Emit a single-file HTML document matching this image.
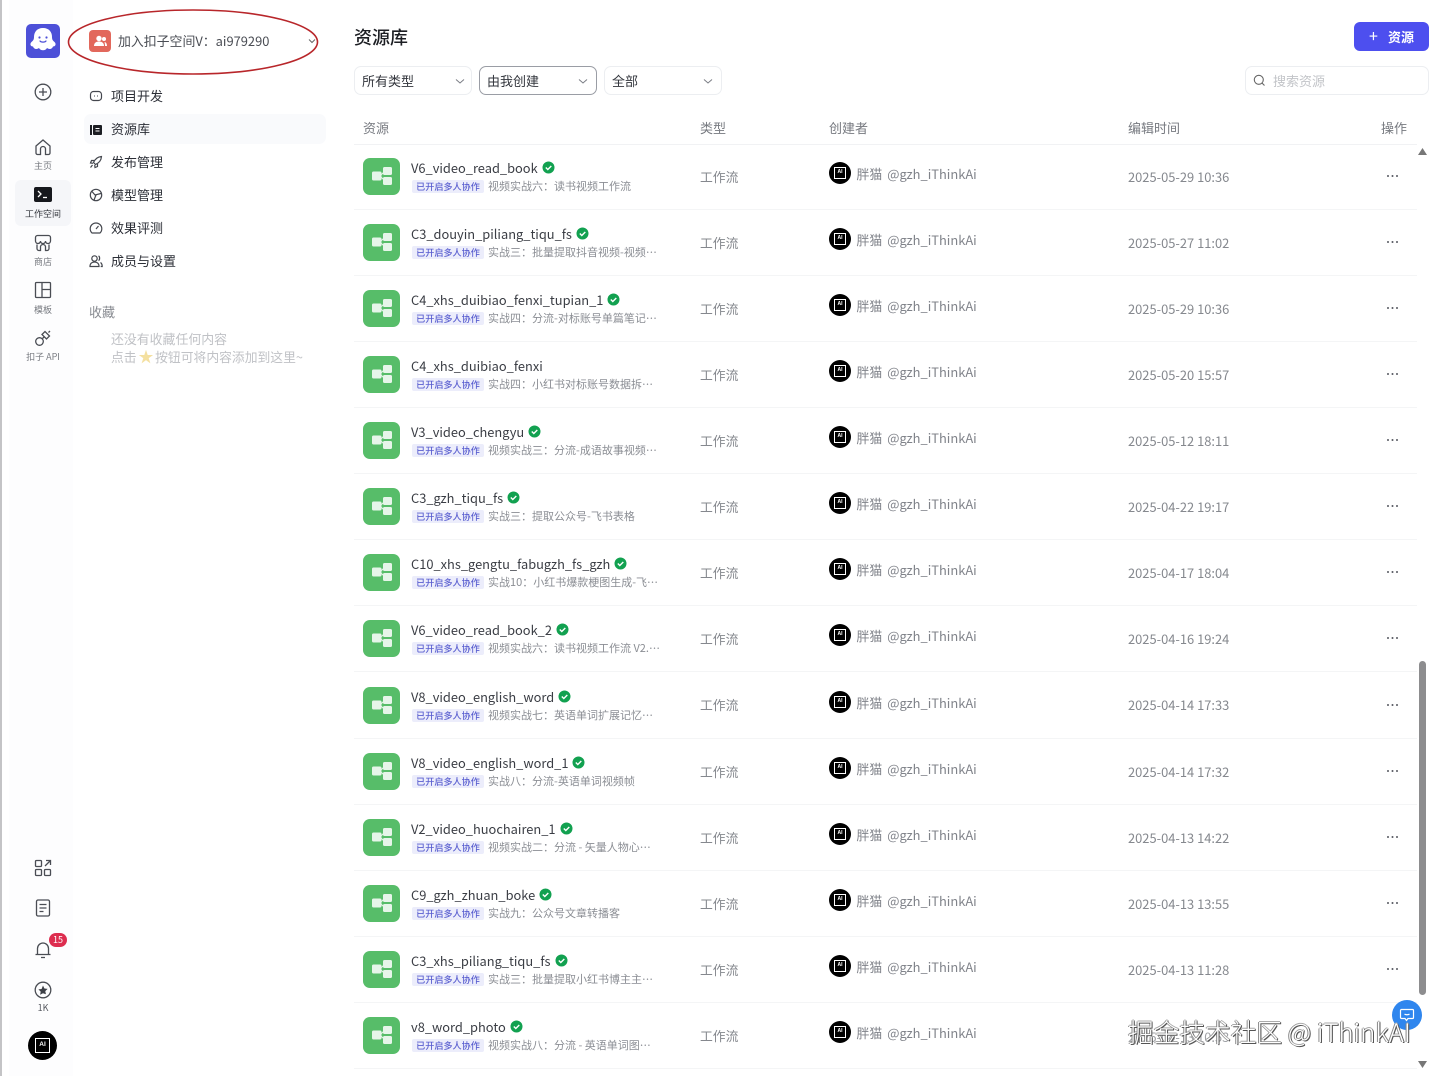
<!DOCTYPE html>
<html lang="zh"><head><meta charset="utf-8"><title>资源库</title>
<style>
*{box-sizing:border-box}
html,body{margin:0;padding:0;width:1440px;height:1076px;overflow:hidden;background:#fff}
body{position:relative;font-family:"Noto Sans CJK SC","Liberation Sans",sans-serif;color:#1f2329}
.a{position:absolute;white-space:nowrap}
.nav{position:absolute;left:111px;font-size:13px;line-height:20px;color:#2b2e36}
.ni{position:absolute;left:88px;width:16px;height:16px;fill:none;stroke:#44474e;stroke-width:1.2}
.side{position:absolute;left:14px;width:58px;text-align:center;font-size:9px;line-height:12px;color:#777a80}
.si{position:absolute;fill:none;stroke:#4a4d54;stroke-width:1.3}
.sel{position:absolute;top:66px;height:29px;border:1px solid #eceef1;border-radius:7px;background:#fff;font-size:13px;line-height:28px;padding-left:7px;color:#33363d}
.sel svg{position:absolute;right:6px;top:9px;width:10px;height:10px;fill:none;stroke:#7a7d84;stroke-width:1}
.th{position:absolute;top:118.500px;font-size:13px;line-height:18px;color:#777a80}
.row{position:absolute;left:354px;width:1063px;height:66px;border-bottom:1px solid #f4f5f6}
.ic{position:absolute;left:9px;top:14px;width:37px;height:37px;border-radius:7px;background:#57bd69}
.ic svg{position:absolute;left:8px;top:8px;width:21px;height:21px}
.nm{position:absolute;left:57px;top:14px;font-size:12.850px;line-height:20px;color:#3a3d44;white-space:nowrap}
.nm svg{display:inline-block;width:13px;height:13px;vertical-align:-1px;margin-left:4px}
.tag{position:absolute;left:58px;top:36px;width:72px;height:13px;background:#ecedfb;border-radius:2px;color:#5a5fd0;font-size:9.100px;font-weight:500;line-height:13px;text-align:center;white-space:nowrap}
.de{position:absolute;left:134px;top:34px;font-size:11px;line-height:17px;color:#8b8e94;white-space:nowrap}
.ty{position:absolute;left:346px;top:23px;font-size:12.800px;line-height:19px;color:#85888e}
.av{position:absolute;left:475px;top:18px;width:22px;height:22px;border-radius:50%;background:#000}
.av i{position:absolute;left:5px;top:5px;width:12px;height:12px;border:1.500px solid #fff;color:#fff;font:normal bold 5px/9px "Liberation Sans",sans-serif;text-align:center}
.cr{position:absolute;left:502.500px;top:20px;font-size:12.900px;line-height:19px;color:#80838a;white-space:nowrap}
.cr span{margin-left:5px}
.ti{position:absolute;left:774px;top:23px;font-size:12.900px;line-height:19px;color:#85888e;white-space:nowrap}
.dt{position:absolute;left:1033px;top:31px;width:2px;height:2px;border-radius:50%;background:#55585f;box-shadow:4.500px 0 #55585f,9px 0 #55585f}
</style></head><body>
<svg width="0" height="0" style="position:absolute"><defs>
<symbol id="flow" viewBox="0 0 21 21"><g fill="#e6f5e9"><rect x="1" y="5.500" width="9.500" height="9" rx="1.500"/><rect x="12" y="1" width="9" height="8" rx="1.500"/><rect x="12" y="11" width="9" height="8" rx="1.500"/></g><path d="M10 9l3-3M10 11l3 3" stroke="#e6f5e9" stroke-width="1"/></symbol>
<symbol id="ok" viewBox="0 0 13 13"><circle cx="6.500" cy="6.500" r="6" fill="#12a150"/><path d="M3.800 6.500l2 2 3.500-3.500" fill="none" stroke="#fff" stroke-width="1.400"/></symbol>
</defs></svg>
<div class="a" style="left:0;top:0;width:2px;height:1076px;background:#c4c4c6"></div>
<div class="a" style="left:9px;top:0;width:64px;height:1076px;background:#fdfdfe"></div>

<!-- logo -->
<svg class="a" style="left:26px;top:24px" width="34" height="34" viewBox="0 0 34 34"><rect width="34" height="34" rx="5" fill="#4d50d8"/><path d="M17 4c-6 0-9 4-9 9 0 2-.5 3.500-2.500 5-2 2-1 4.500 1.500 4.500 1 3 4 3 6 1.500 1.500 3 6.500 3 8 0 2 1.500 5 1.500 6-1.500 2.500 0 3.500-2.500 1.500-4.500-2-1.500-2.500-3-2.500-5 0-5-3-9-9-9z" fill="#fff"/><circle cx="13.500" cy="13.500" r="1.100" fill="#4d50d8"/><circle cx="20.500" cy="13.500" r="1.100" fill="#4d50d8"/><path d="M14 17c1 1.500 5 1.500 6 0" fill="none" stroke="#4d50d8" stroke-width="1.200" stroke-linecap="round"/></svg>

<!-- red ellipse -->
<svg class="a" style="left:66px;top:8px" width="254" height="68" viewBox="0 0 254 68"><ellipse cx="127" cy="34" rx="124.500" ry="32" fill="none" stroke="#b8262a" stroke-width="1.600"/></svg>
<svg class="a" style="left:89px;top:30px" width="22" height="22" viewBox="0 0 22 22"><rect width="22" height="22" rx="4" fill="#e2685c"/><circle cx="10" cy="8.500" r="2.700" fill="#fff"/><path d="M5 16c0-3 2-4.500 5-4.500s5 1.500 5 4.500z" fill="#fff"/><circle cx="15" cy="9" r="2" fill="#fff"/><path d="M15.500 12c1.500.3 2.500 1.700 2.500 4h-2c0-1.500-.2-3-.5-4z" fill="#fff"/></svg>
<div class="a" style="left:118px;top:31px;font-size:12.900px;line-height:20px;color:#4a4d54">加入扣子空间V：ai979290</div>
<svg class="a" style="left:308px;top:37px" width="8" height="8" viewBox="0 0 8 8"><path d="M1 2.500l3 3 3-3" fill="none" stroke="#666" stroke-width="1"/></svg>

<!-- left rail -->
<svg class="si" style="left:34px;top:83px" width="18" height="18" viewBox="0 0 18 18"><circle cx="9" cy="9" r="7.800"/><path d="M9 5v8M5 9h8"/></svg>
<svg class="si" style="left:34px;top:138px" width="18" height="18" viewBox="0 0 18 18"><path d="M2 8l7-6 7 6v7a1.500 1.500 0 0 1-1.500 1.500h-3V11a2.500 2.500 0 0 0-5 0v5.500h-3A1.500 1.500 0 0 1 2 15z"/></svg>
<div class="side" style="top:160px">主页</div>
<div class="a" style="left:15px;top:180px;width:56px;height:46px;border-radius:6px;background:#f5f6f9"></div>
<svg class="a" style="left:34px;top:187px" width="18" height="15" viewBox="0 0 18 15"><rect width="18" height="15" rx="2" fill="#16181d"/><path d="M4 4l3 3-3 3" fill="none" stroke="#fff" stroke-width="1.300"/><path d="M9 10.500h4" stroke="#fff" stroke-width="1.300"/></svg>
<div class="side" style="top:208px;color:#33363d">工作空间</div>
<svg class="si" style="left:34px;top:234px" width="18" height="18" viewBox="0 0 18 18"><path d="M3.500 1.500h11a2 2 0 0 1 2 2v3.500a2.500 2.500 0 0 1-5 0 2.500 2.500 0 0 1-5 0 2.500 2.500 0 0 1-5 0V3.500a2 2 0 0 1 2-2zM3 10.500v4a2 2 0 0 0 2 2h1.500V13a2.500 2.500 0 0 1 5 0v3.500H13a2 2 0 0 0 2-2v-4"/></svg>
<div class="side" style="top:256px">商店</div>
<svg class="si" style="left:34px;top:281px" width="18" height="18" viewBox="0 0 18 18"><rect x="1.500" y="1.500" width="15" height="15" rx="1"/><path d="M8 1.500v15M8 8.500h8.500"/></svg>
<div class="side" style="top:304px">模板</div>
<svg class="si" style="left:34px;top:329px" width="18" height="18" viewBox="0 0 18 18"><circle cx="5.500" cy="12.500" r="3.800"/><path d="M8 5.500l3-3 4.500 4.500-3 3zM8.500 9.500l1.500-1.500M16 2l-1.500 1.500"/></svg>
<div class="side" style="top:351px">扣子 API</div>

<svg class="si" style="left:34px;top:859px" width="18" height="18" viewBox="0 0 18 18"><rect x="1.500" y="1.500" width="6" height="6" rx="1"/><rect x="1.500" y="10.500" width="6" height="6" rx="1"/><rect x="10.500" y="10.500" width="6" height="6" rx="1"/><path d="M11 7l5.500-5.500M12 1.500h4.500V6"/></svg>
<svg class="si" style="left:35px;top:899px" width="16" height="18" viewBox="0 0 16 18"><rect x="1.500" y="1" width="13" height="16" rx="1.500"/><path d="M4.500 5.500h7M4.500 9h7M4.500 12.500h4"/></svg>
<svg class="si" style="left:34px;top:940px" width="18" height="19" viewBox="0 0 18 19"><path d="M1.500 14.500h15M3.500 14.500V8.500a5.500 5.500 0 0 1 11 0v6M7 17.500h4"/></svg>
<div class="a" style="left:49px;top:933px;width:18px;height:14px;border-radius:7px;background:#dd2d4f;color:#fff;font-size:9px;line-height:14px;text-align:center">15</div>
<svg class="si" style="left:34px;top:981px" width="18" height="18" viewBox="0 0 18 18"><circle cx="9" cy="9" r="7.800"/><path d="M9 4.500l1.400 3 3.200.4-2.300 2.200.6 3.200L9 12.300l-2.900 1.500.6-3.200-2.300-2.200 3.200-.4z" fill="#3c3f46" stroke="none"/></svg>
<div class="side" style="top:1002px;color:#55585f">1K</div>
<div class="a" style="left:28px;top:1031px;width:29px;height:29px;border-radius:50%;background:#000"></div>
<div class="a" style="left:35px;top:1038px;width:15px;height:15px;border:1.500px solid #fff;color:#fff;font:bold 6.500px/12px 'Liberation Sans',sans-serif;text-align:center">AI</div>

<!-- second nav -->
<svg class="ni" style="top:88px" viewBox="0 0 16 16"><rect x="2.500" y="3.500" width="11" height="9" rx="3"/><path d="M6 8h.8M9.200 8h.8"/></svg>
<div class="nav" style="top:86px">项目开发</div>
<div class="a" style="left:84px;top:114px;width:242px;height:30px;border-radius:7px;background:#f9fafc"></div>
<svg class="a" style="left:90px;top:124px" width="12" height="12" viewBox="0 0 12 12"><rect x="0" y="1" width="2" height="10" fill="#1c1e23"/><rect x="3" y="1" width="9" height="10" rx="1" fill="#1c1e23"/><path d="M5.500 4.500h4M5.500 7h4" stroke="#fff"/></svg>
<div class="nav" style="top:119px">资源库</div>
<svg class="ni" style="top:154px" viewBox="0 0 16 16"><path d="M13.500 2.500c-4 .3-6.500 2.500-8 6l2 2c3.500-1.500 5.700-4 6-8zM6 6.500H3.500L2.500 9l2.500.3M9.500 10v2.500l-2.500 1-.3-2.500M4.500 11l-2 2.500"/></svg>
<div class="nav" style="top:152px">发布管理</div>
<svg class="ni" style="top:187px" viewBox="0 0 16 16"><circle cx="8" cy="8" r="5.700"/><path d="M4 4.500l3 3.500 6-1.500M8 8l-2 5"/></svg>
<div class="nav" style="top:185px">模型管理</div>
<svg class="ni" style="top:220px" viewBox="0 0 16 16"><path d="M4 13a5.800 5.800 0 1 1 8 0z"/><path d="M8 9l2.500-3"/></svg>
<div class="nav" style="top:218px">效果评测</div>
<svg class="ni" style="top:253px" viewBox="0 0 16 16"><circle cx="6.500" cy="5.500" r="2.700"/><path d="M2 13.500c0-3 2-4.500 4.500-4.500S11 10.500 11 13.500zM10.500 3c1.500.5 1.500 4 0 4.500M12.500 9.500c1 .7 1.700 2 1.700 4h-1.500"/></svg>
<div class="nav" style="top:251px">成员与设置</div>
<div class="a" style="left:89px;top:302px;font-size:13px;line-height:19px;color:#888b91">收藏</div>
<div class="a" style="left:111px;top:330px;font-size:12.900px;line-height:18px;color:#c0c2c6">还没有收藏任何内容</div>
<div class="a" style="left:111px;top:348px;font-size:12.800px;line-height:18px;color:#c0c2c6">点击 <span style="color:#f4e0a0;font-size:15px;line-height:0;display:inline-block;width:12.800px;text-indent:-1px">★</span> 按钮可将内容添加到这里~</div>

<!-- header -->
<div class="a" style="left:354px;top:24px;font-size:18px;line-height:26px;font-weight:500;color:#1c1e23">资源库</div>
<div class="a" style="left:1354px;top:22px;width:75px;height:29px;border-radius:6px;background:#4d4fef"></div>
<div class="a" style="left:1369px;top:22px;color:#fff;font-size:16px;line-height:27px;font-weight:400">+</div>
<div class="a" style="left:1388px;top:22px;color:#fff;font-size:13px;line-height:29px;font-weight:700">资源</div>

<div class="sel" style="left:354px;width:118px">所有类型<svg viewBox="0 0 10 10"><path d="M1 3.500L5 7l4-3.500"/></svg></div>
<div class="sel" style="left:479px;width:118px;border-color:#9a9da5">由我创建<svg viewBox="0 0 10 10" style="right:8px"><path d="M1 3.500L5 7l4-3.500"/></svg></div>
<div class="sel" style="left:604px;width:118px">全部<svg viewBox="0 0 10 10" style="right:8px"><path d="M1 3.500L5 7l4-3.500"/></svg></div>
<div class="a" style="left:1245px;top:66px;width:184px;height:29px;border:1px solid #eceef1;border-radius:7px;background:#fff"></div>
<svg class="a" style="left:1253px;top:74px" width="13" height="13" viewBox="0 0 13 13"><circle cx="5.800" cy="5.800" r="4.500" fill="none" stroke="#666" stroke-width="1.100"/><path d="M9 9l2.500 2.500" stroke="#666" stroke-width="1.100"/></svg>
<div class="a" style="left:1273px;top:71px;font-size:13px;line-height:19px;color:#c2c4c8">搜索资源</div>

<div class="th" style="left:363px">资源</div>
<div class="th" style="left:700px">类型</div>
<div class="th" style="left:829px">创建者</div>
<div class="th" style="left:1128px">编辑时间</div>
<div class="th" style="left:1381px">操作</div>
<div class="a" style="left:354px;top:144px;width:1063px;height:1px;background:#f1f2f4"></div>

<!-- rows -->
<div class="row" style="top:144px"><div class="ic"><svg><use href="#flow"/></svg></div><div class="nm">V6_video_read_book<svg><use href="#ok"/></svg></div><div class="tag">已开启多人协作</div><div class="de">视频实战六：读书视频工作流</div><div class="ty">工作流</div><div class="av"><i>AI</i></div><div class="cr">胖猫<span>@gzh_iThinkAi</span></div><div class="ti">2025-05-29 10:36</div><div class="dt"></div></div>
<div class="row" style="top:210px"><div class="ic"><svg><use href="#flow"/></svg></div><div class="nm">C3_douyin_piliang_tiqu_fs<svg><use href="#ok"/></svg></div><div class="tag">已开启多人协作</div><div class="de">实战三：批量提取抖音视频-视频…</div><div class="ty">工作流</div><div class="av"><i>AI</i></div><div class="cr">胖猫<span>@gzh_iThinkAi</span></div><div class="ti">2025-05-27 11:02</div><div class="dt"></div></div>
<div class="row" style="top:276px"><div class="ic"><svg><use href="#flow"/></svg></div><div class="nm">C4_xhs_duibiao_fenxi_tupian_1<svg><use href="#ok"/></svg></div><div class="tag">已开启多人协作</div><div class="de">实战四：分流-对标账号单篇笔记…</div><div class="ty">工作流</div><div class="av"><i>AI</i></div><div class="cr">胖猫<span>@gzh_iThinkAi</span></div><div class="ti">2025-05-29 10:36</div><div class="dt"></div></div>
<div class="row" style="top:342px"><div class="ic"><svg><use href="#flow"/></svg></div><div class="nm">C4_xhs_duibiao_fenxi</div><div class="tag">已开启多人协作</div><div class="de">实战四：小红书对标账号数据拆…</div><div class="ty">工作流</div><div class="av"><i>AI</i></div><div class="cr">胖猫<span>@gzh_iThinkAi</span></div><div class="ti">2025-05-20 15:57</div><div class="dt"></div></div>
<div class="row" style="top:408px"><div class="ic"><svg><use href="#flow"/></svg></div><div class="nm">V3_video_chengyu<svg><use href="#ok"/></svg></div><div class="tag">已开启多人协作</div><div class="de">视频实战三：分流-成语故事视频…</div><div class="ty">工作流</div><div class="av"><i>AI</i></div><div class="cr">胖猫<span>@gzh_iThinkAi</span></div><div class="ti">2025-05-12 18:11</div><div class="dt"></div></div>
<div class="row" style="top:474px"><div class="ic"><svg><use href="#flow"/></svg></div><div class="nm">C3_gzh_tiqu_fs<svg><use href="#ok"/></svg></div><div class="tag">已开启多人协作</div><div class="de">实战三：提取公众号-飞书表格</div><div class="ty">工作流</div><div class="av"><i>AI</i></div><div class="cr">胖猫<span>@gzh_iThinkAi</span></div><div class="ti">2025-04-22 19:17</div><div class="dt"></div></div>
<div class="row" style="top:540px"><div class="ic"><svg><use href="#flow"/></svg></div><div class="nm">C10_xhs_gengtu_fabugzh_fs_gzh<svg><use href="#ok"/></svg></div><div class="tag">已开启多人协作</div><div class="de">实战10：小红书爆款梗图生成-飞…</div><div class="ty">工作流</div><div class="av"><i>AI</i></div><div class="cr">胖猫<span>@gzh_iThinkAi</span></div><div class="ti">2025-04-17 18:04</div><div class="dt"></div></div>
<div class="row" style="top:606px"><div class="ic"><svg><use href="#flow"/></svg></div><div class="nm">V6_video_read_book_2<svg><use href="#ok"/></svg></div><div class="tag">已开启多人协作</div><div class="de">视频实战六：读书视频工作流 V2.…</div><div class="ty">工作流</div><div class="av"><i>AI</i></div><div class="cr">胖猫<span>@gzh_iThinkAi</span></div><div class="ti">2025-04-16 19:24</div><div class="dt"></div></div>
<div class="row" style="top:672.500px"><div class="ic"><svg><use href="#flow"/></svg></div><div class="nm">V8_video_english_word<svg><use href="#ok"/></svg></div><div class="tag">已开启多人协作</div><div class="de">视频实战七：英语单词扩展记忆…</div><div class="ty" style="top:22px">工作流</div><div class="av"><i>AI</i></div><div class="cr">胖猫<span>@gzh_iThinkAi</span></div><div class="ti" style="top:22px">2025-04-14 17:33</div><div class="dt"></div></div>
<div class="row" style="top:739px"><div class="ic"><svg><use href="#flow"/></svg></div><div class="nm">V8_video_english_word_1<svg><use href="#ok"/></svg></div><div class="tag">已开启多人协作</div><div class="de">实战八：分流-英语单词视频帧</div><div class="ty">工作流</div><div class="av"><i>AI</i></div><div class="cr">胖猫<span>@gzh_iThinkAi</span></div><div class="ti">2025-04-14 17:32</div><div class="dt"></div></div>
<div class="row" style="top:805px"><div class="ic"><svg><use href="#flow"/></svg></div><div class="nm">V2_video_huochairen_1<svg><use href="#ok"/></svg></div><div class="tag">已开启多人协作</div><div class="de">视频实战二：分流 - 矢量人物心…</div><div class="ty">工作流</div><div class="av"><i>AI</i></div><div class="cr">胖猫<span>@gzh_iThinkAi</span></div><div class="ti">2025-04-13 14:22</div><div class="dt"></div></div>
<div class="row" style="top:871px"><div class="ic"><svg><use href="#flow"/></svg></div><div class="nm">C9_gzh_zhuan_boke<svg><use href="#ok"/></svg></div><div class="tag">已开启多人协作</div><div class="de">实战九：公众号文章转播客</div><div class="ty">工作流</div><div class="av"><i>AI</i></div><div class="cr">胖猫<span>@gzh_iThinkAi</span></div><div class="ti">2025-04-13 13:55</div><div class="dt"></div></div>
<div class="row" style="top:937px"><div class="ic"><svg><use href="#flow"/></svg></div><div class="nm">C3_xhs_piliang_tiqu_fs<svg><use href="#ok"/></svg></div><div class="tag">已开启多人协作</div><div class="de">实战三：批量提取小红书博主主…</div><div class="ty">工作流</div><div class="av"><i>AI</i></div><div class="cr">胖猫<span>@gzh_iThinkAi</span></div><div class="ti">2025-04-13 11:28</div><div class="dt"></div></div>
<div class="row" style="top:1003px"><div class="ic"><svg><use href="#flow"/></svg></div><div class="nm">v8_word_photo<svg><use href="#ok"/></svg></div><div class="tag">已开启多人协作</div><div class="de">视频实战八：分流 - 英语单词图…</div><div class="ty">工作流</div><div class="av"><i>AI</i></div><div class="cr">胖猫<span>@gzh_iThinkAi</span></div></div>

<!-- scrollbar -->
<svg class="a" style="left:1418px;top:148px" width="9" height="7" viewBox="0 0 9 7"><path d="M4.500 0L9 7H0z" fill="#777"/></svg>
<div class="a" style="left:1419px;top:661px;width:7px;height:334px;border-radius:4px;background:#8d8d8f"></div>
<svg class="a" style="left:1418px;top:1061px" width="9" height="7" viewBox="0 0 9 7"><path d="M0 0h9L4.500 7z" fill="#777"/></svg>

<!-- chat bubble -->
<div class="a" style="left:1392px;top:1000px;width:30px;height:30px;border-radius:50%;background:#2f86ee"></div>
<svg class="a" style="left:1399px;top:1007px" width="16" height="16" viewBox="0 0 16 16"><path d="M2.500 2.500h11a1 1 0 0 1 1 1v7a1 1 0 0 1-1 1H9L7.500 13.500 6 11.500H2.500a1 1 0 0 1-1-1v-7a1 1 0 0 1 1-1z" fill="none" stroke="#fff" stroke-width="1.200"/><path d="M5.500 7c1 1 4 1 5 0" fill="none" stroke="#fff" stroke-width="1.200"/></svg>

<!-- watermark -->
<div class="a" style="left:1128px;top:1029px;font-size:12.900px;line-height:16px;color:#a0a2a6">2025-04-13 10:53</div>
<div class="a" style="left:1128px;top:1015px;font-size:25.700px;line-height:34px;color:#fff;text-shadow:1px 1px 0 #555,-1px 0 0 #888,0 -1px 0 #aaa,1px 0 0 #666;font-family:'Noto Sans CJK SC',sans-serif;font-weight:300">掘金技术社区 @ iThinkAI</div>
</body></html>
